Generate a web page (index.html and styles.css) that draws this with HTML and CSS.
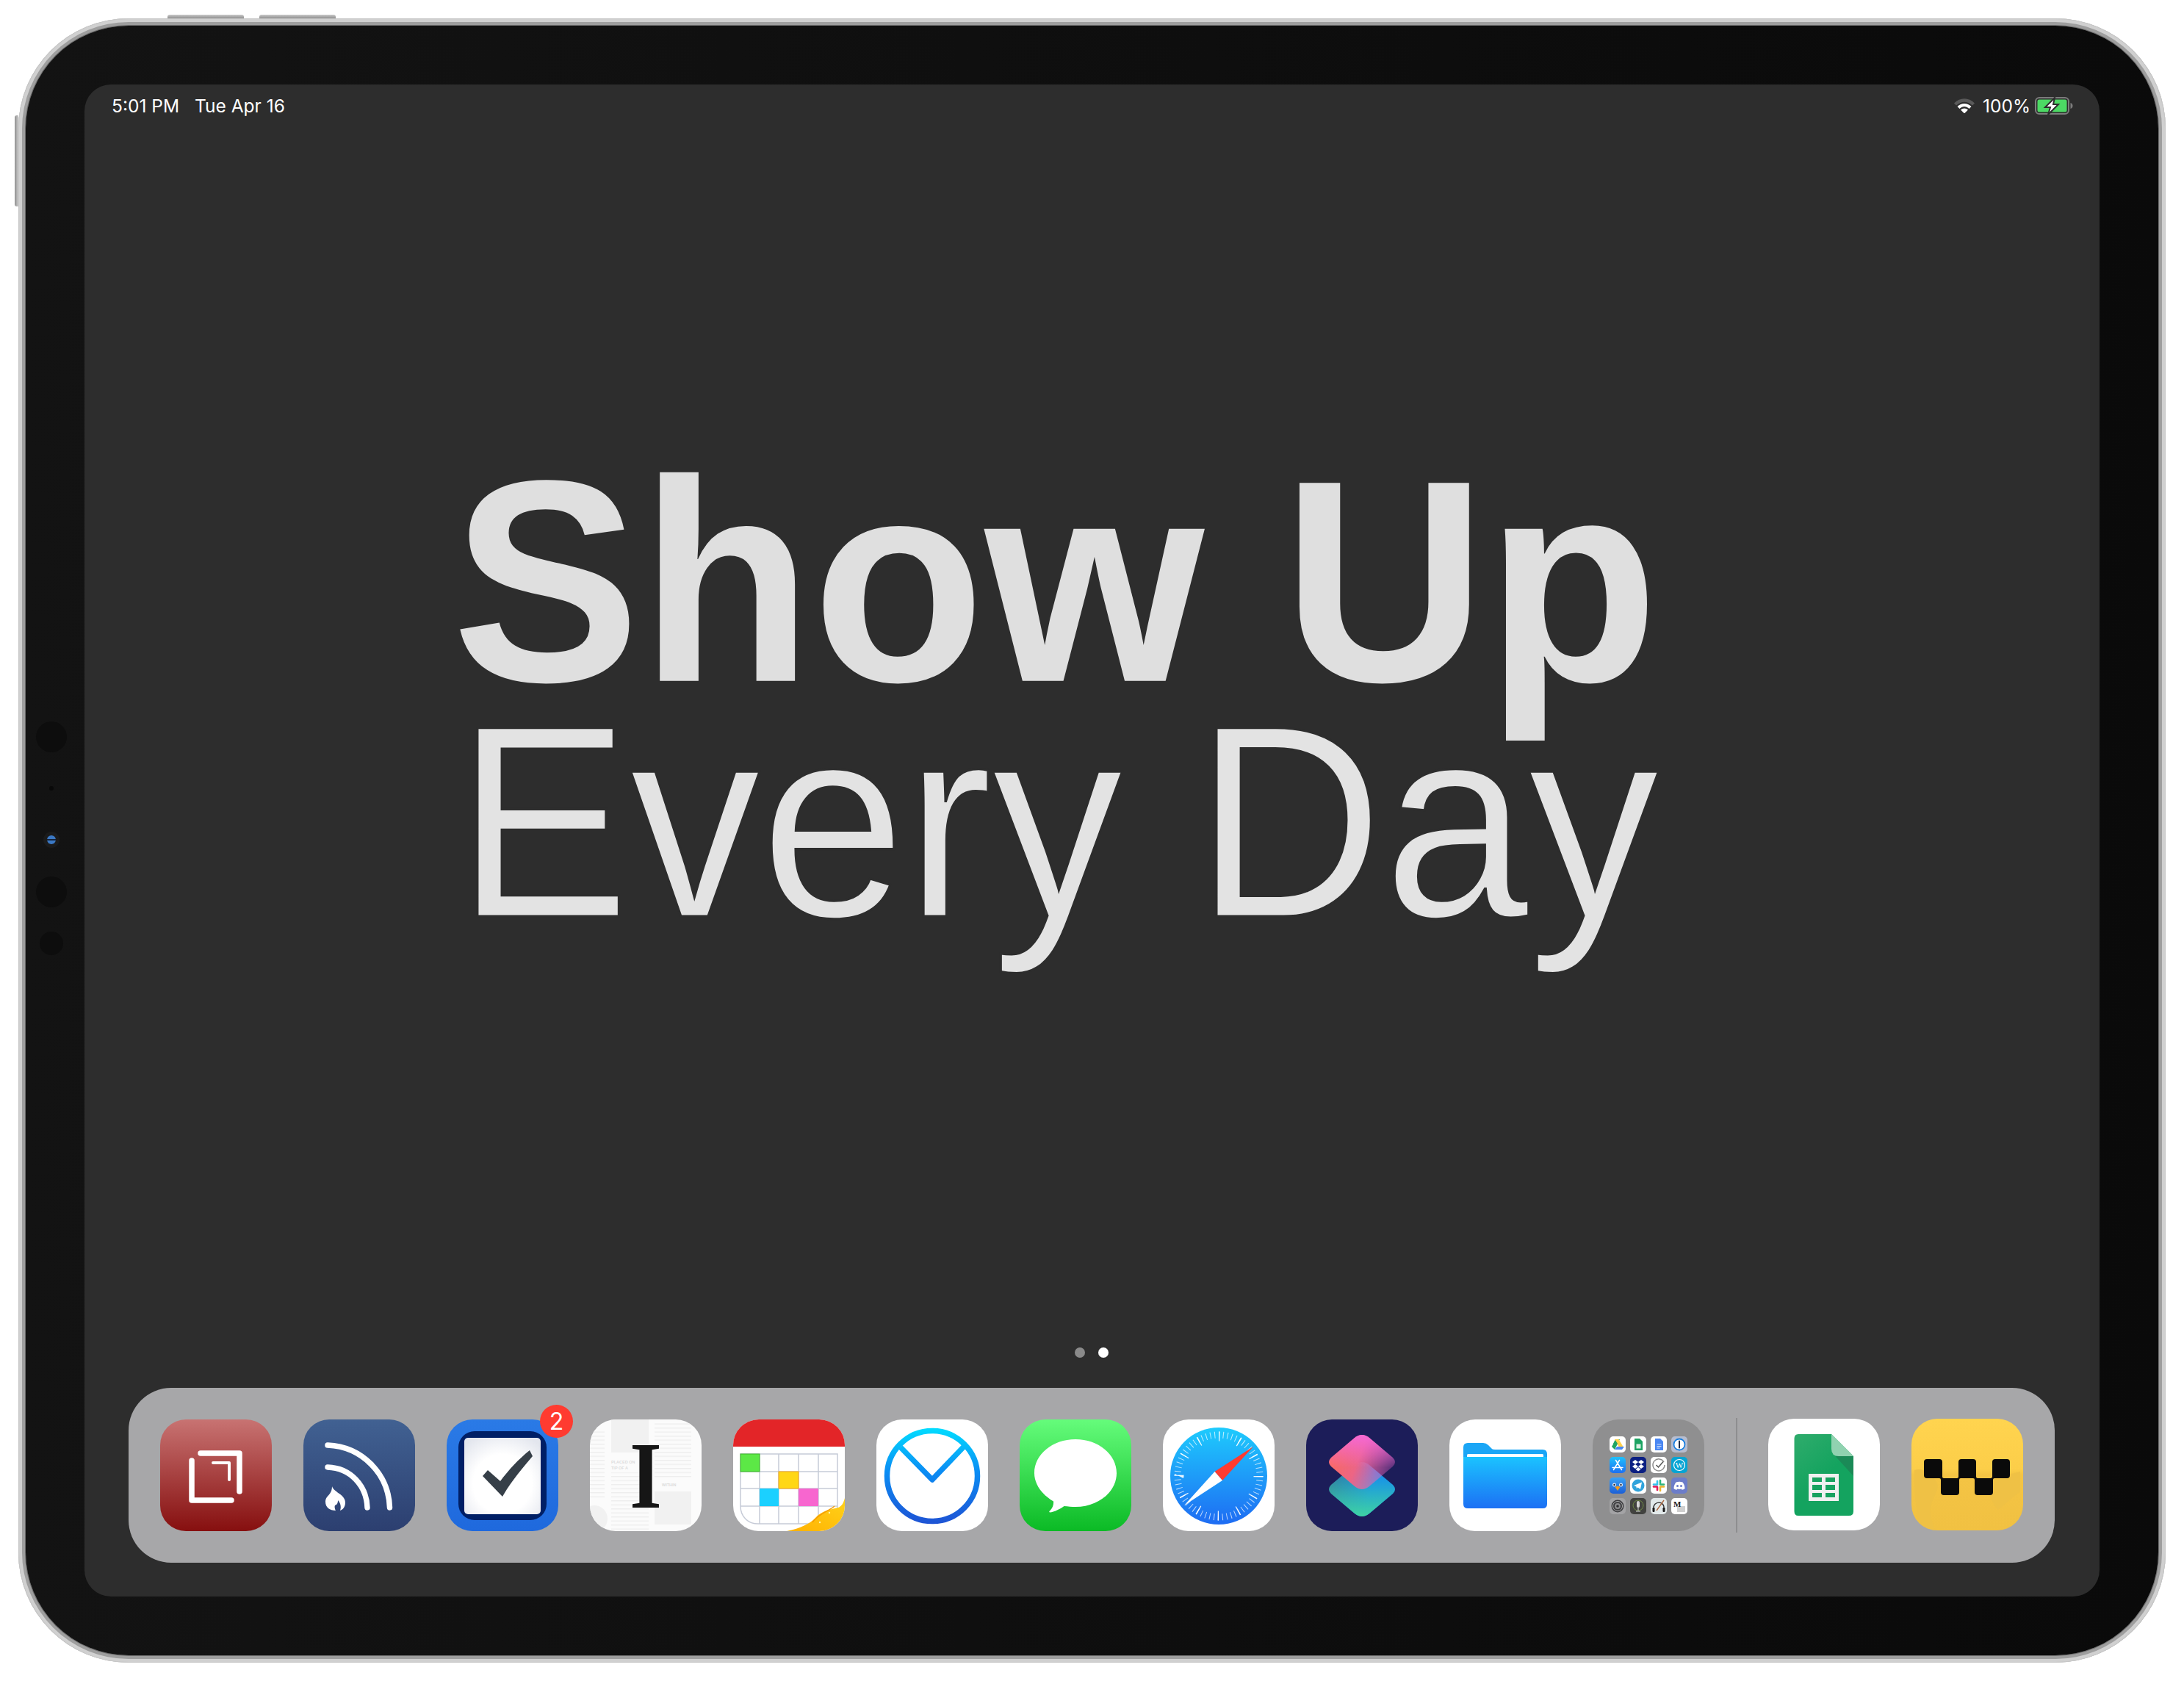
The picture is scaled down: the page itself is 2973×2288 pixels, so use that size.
FILE: index.html
```html
<!DOCTYPE html>
<html>
    <head>
        <title>Show Up Every Day</title>
        <link rel="stylesheet" href="styles.css">
    </head>
    <body>
        <div class="device">
            <div class="hw-btn hw-top hw-top-a"></div>
            <div class="hw-btn hw-top hw-top-b"></div>
            <div class="hw-btn hw-side"></div>
            <div class="bezel">
                <div class="lens lens-a"></div>
                <div class="mic"></div>
                <div class="led"></div>
                <div class="lens lens-b"></div>
                <div class="lens lens-c"></div>

                <div class="screen">
                    <div class="status">
                        <div class="status-left"><span>5:01 PM</span><span>Tue Apr 16</span></div>
                        <div class="status-right">
                            <svg class="wifi" viewBox="0 0 28 20">
                                <path d="M0 6.5C8-2 20-2 28 6.5L25 9.5C18 3 10 3 3 9.500Z" fill="#5a5a5a"/>
                                <path d="M4.500 11C10 5.500 18 5.500 23.500 11L20.500 14C16.500 10 11.500 10 7.500 14Z" fill="#fff"/>
                                <path d="M9 15.500C12 12.800 16 12.800 19 15.500L14 20.500Z" fill="#fff"/>
                            </svg>
                            <span class="pct">100%</span>
                            <svg class="battery" viewBox="0 0 52 24">
                                <rect x="1" y="1" width="45" height="22" rx="5" fill="none" stroke="#7c7c7c" stroke-width="2"/>
                                <rect x="3.500" y="3.500" width="40" height="17" rx="2.500" fill="#4cd964"/>
                                <path d="M48.500 8C51 9 51.500 10.500 51.500 12S51 15 48.500 16Z" fill="#7c7c7c"/>
                                <path d="M27 1L14 14H21L18 24L32 10H25Z" fill="#fff" stroke="#2d2d2d" stroke-width="2"/>
                            </svg>
                        </div>
                    </div>

                    <div class="main">
                        <h1 class="title">
                            <span class="title-bold">Show Up</span>
                            <span class="title-light">Every Day</span>
                        </h1>
                    </div>

                    <div class="dots"><i class="dot"></i><i class="dot dot-on"></i></div>

                    <div class="dock">
                        <!-- red app -->
                        <svg class="icon" viewBox="0 0 152 152">
                            <defs><linearGradient id="g1" x1="0" y1="0" x2="0" y2="1"><stop offset="0" stop-color="#c87372"/><stop offset="1" stop-color="#860f0f"/></linearGradient></defs>
                            <rect width="152" height="152" fill="url(#g1)"/>
                            <g fill="none" stroke="#fff" stroke-linecap="round" stroke-linejoin="round">
                                <path d="M55 46H108V98" stroke-width="7.500"/>
                                <path d="M43 56V110H97" stroke-width="7.500"/>
                                <path d="M72 59H94V82" stroke-width="4"/>
                            </g>
                        </svg>
                        <!-- feed reader -->
                        <svg class="icon" viewBox="0 0 152 152">
                            <defs><linearGradient id="g2" x1="0" y1="0" x2="0" y2="1"><stop offset="0" stop-color="#416192"/><stop offset="1" stop-color="#2c3f70"/></linearGradient></defs>
                            <rect width="152" height="152" fill="url(#g2)"/>
                            <g fill="none" stroke="#fff" stroke-width="7.500" stroke-linecap="round">
                                <path d="M33 35C80 37 116 74 117.500 120"/>
                                <path d="M33 65C64 66 86 90 87 120"/>
                            </g>
                            <path d="M39 91C41 99 57 102 57 113C57 120 53 123 50 124C52 118 50 113 47 110C47 115 45 116 43 117C42 119 43 122 44 124C36 124 30 120 30 112C30 106 34 104 36 101C38 98 39 95 39 91Z" fill="#fff"/>
                        </svg>
                        <!-- task list, has a badge -->
                        <div class="icon-wrap">
                            <svg class="icon" viewBox="0 0 152 152">
                                <defs>
                                    <linearGradient id="g3" x1="0" y1="0" x2="0" y2="1"><stop offset="0" stop-color="#2a7ae6"/><stop offset="1" stop-color="#1f69dd"/></linearGradient>
                                    <radialGradient id="g3b" cx=".5" cy=".6" r=".7"><stop offset=".55" stop-color="#fff"/><stop offset="1" stop-color="#e3e6ee"/></radialGradient>
                                </defs>
                                <rect width="152" height="152" fill="url(#g3)"/>
                                <rect x="16" y="16" width="120" height="121" rx="22" fill="#001f66"/>
                                <rect x="24" y="25" width="104" height="104" rx="5" fill="url(#g3b)"/>
                                <path d="M49 77L56 69L73 84C85 68 98 54 113 42L117 50C102 68 88 84 76 105Z" fill="#363f48"/>
                            </svg>
                            <span class="badge">2</span>
                        </div>
                        <!-- newspaper app -->
                        <svg class="icon" viewBox="0 0 152 152">
                            <defs><pattern id="news" width="10" height="5.500" patternUnits="userSpaceOnUse"><rect width="10" height="1.400" fill="#eeeeee"/></pattern></defs>
                            <rect width="152" height="152" fill="#fbfbfb"/>
                            <rect x="0" y="14" width="20" height="95" fill="url(#news)"/>
                            <rect x="29" y="0" width="51" height="45" fill="#f1f1f1"/>
                            <rect x="29" y="72" width="51" height="80" fill="url(#news)"/>
                            <rect x="88" y="4" width="50" height="76" fill="url(#news)"/>
                            <rect x="88" y="98" width="50" height="45" fill="#f1f1f1"/>
                            <circle cx="6" cy="135" r="18" fill="#f1f1f1"/>
                            <g class="news-head"><text x="29" y="60">PLACED ON</text><text x="29" y="68">TIP OF A</text><text x="98" y="91">WITHIN</text></g>
                            <text class="insta" transform="translate(76 120) scale(.86 1)" text-anchor="middle">I</text>
                        </svg>
                        <!-- calendar -->
                        <svg class="icon" viewBox="0 0 152 152">
                            <defs><linearGradient id="g5" x1="0" y1="1" x2="1" y2="0"><stop offset="0" stop-color="#ffb000"/><stop offset="1" stop-color="#ffd21a"/></linearGradient></defs>
                            <rect width="152" height="152" fill="#fff"/>
                            <rect width="152" height="37" fill="#e32528"/>
                            <path d="M10 118V47H142V125M10 118C10 132 20 142 34 142H116M36 47V142M62 47V142M89 47V142M116 47V142M10 71H142M10 94H142M10 118H142" fill="none" stroke="#c6cbd7" stroke-width="1.500"/>
                            <rect x="10" y="47" width="26" height="24" fill="#5ce846" stroke="#3eb42c"/>
                            <rect x="62" y="71" width="27" height="23" fill="#ffd716" stroke="#f3a51a"/>
                            <rect x="36" y="94" width="26" height="24" fill="#1bd0ff"/>
                            <rect x="89" y="94" width="27" height="24" fill="#f766cf"/>
                            <path d="M73 152C92 148 104 142 112 134C120 124 134 122 143 120C148 118 150 114 152 107V152Z" fill="url(#g5)"/>
                            <path d="M108 140C116 128 130 125 138 118" fill="none" stroke="#f59a00" stroke-width="1.500"/>
                            <circle cx="131" cy="127" r="1.200" fill="#fff5a8"/><circle cx="118" cy="140" r="1.200" fill="#fff5a8"/>
                        </svg>
                        <!-- mail -->
                        <svg class="icon" viewBox="0 0 152 152">
                            <defs><linearGradient id="g6" gradientUnits="userSpaceOnUse" x1="0" y1="12" x2="0" y2="142"><stop offset="0" stop-color="#02dcff"/><stop offset=".45" stop-color="#0a8df4"/><stop offset="1" stop-color="#1e53d4"/></linearGradient></defs>
                            <rect width="152" height="152" fill="#fff"/>
                            <circle cx="76" cy="77" r="61.500" fill="none" stroke="url(#g6)" stroke-width="7.500"/>
                            <path d="M33 38L76 82L119 37" fill="none" stroke="url(#g6)" stroke-width="7.500" stroke-linejoin="round"/>
                        </svg>
                        <!-- messages -->
                        <svg class="icon" viewBox="0 0 152 152">
                            <defs><linearGradient id="g7" x1="0" y1="0" x2="0" y2="1"><stop offset="0" stop-color="#65fc7b"/><stop offset="1" stop-color="#0bba25"/></linearGradient></defs>
                            <rect width="152" height="152" fill="url(#g7)"/>
                            <path d="M76 27C107 27 132 47.500 132 73C132 98.500 107 119 76 119C71 119 66 118.500 60.500 118C55 122 47 126 41 126.500C40 126 40 125 41 124.500C45 120 46.500 116 46 111.500C30 102 20 88 20 73C20 47.500 45 27 76 27Z" fill="#fff"/>
                        </svg>
                        <!-- browser -->
                        <svg class="icon" viewBox="0 0 152 152">
                            <defs><linearGradient id="g8" x1="0" y1="0" x2="0" y2="1"><stop offset="0" stop-color="#1ecbfd"/><stop offset="1" stop-color="#1e6cf3"/></linearGradient></defs>
                            <rect width="152" height="152" fill="#fff"/>
                            <circle cx="76" cy="77" r="66" fill="url(#g8)"/>
                            <circle cx="76" cy="77" r="56" fill="none" stroke="#fff" stroke-opacity=".7" stroke-width="9" pathLength="120" stroke-dasharray=".35 1.650"/>
                            <circle cx="76" cy="77" r="54" fill="none" stroke="#fff" stroke-opacity=".9" stroke-width="13" pathLength="120" stroke-dasharray=".5 9.500"/>
                            <path d="M70.500 71L123 37L81 83Z" fill="#ff3b30"/>
                            <path d="M70.500 71L29 117L81 83Z" fill="#fff"/>
                        </svg>
                        <!-- shortcuts -->
                        <svg class="icon" viewBox="0 0 152 152">
                            <defs>
                                <linearGradient id="g9a" x1="0" y1="0" x2="1" y2=".2"><stop offset="0" stop-color="#34708f"/><stop offset=".7" stop-color="#0f85f7"/></linearGradient>
                                <linearGradient id="g9c" x1="0" y1="0" x2="0" y2="1"><stop offset=".1" stop-color="#3cd0a5" stop-opacity="0"/><stop offset="1" stop-color="#3fd3a2"/></linearGradient>
                                <linearGradient id="g9b" x1="0" y1=".3" x2="1" y2=".6"><stop offset="0" stop-color="#fb6b5c"/><stop offset=".45" stop-color="#ec6585"/><stop offset="1" stop-color="#f564cf" stop-opacity=".25"/></linearGradient>
                                <linearGradient id="g9d" x1="0" y1="0" x2="0" y2="1"><stop offset="0" stop-color="#f568d6"/><stop offset=".6" stop-color="#f568d6" stop-opacity="0"/></linearGradient>
                            </defs>
                            <rect width="152" height="152" fill="#1c1d59"/>
                            <path d="M66 62Q76 54 86 62L118 89Q124 95 118 101L86 128Q76 136 66 128L34 101Q28 95 34 89Z" fill="url(#g9a)"/>
                            <path d="M66 62Q76 54 86 62L118 89Q124 95 118 101L86 128Q76 136 66 128L34 101Q28 95 34 89Z" fill="url(#g9c)"/>
                            <path d="M66 25Q76 17 86 25L118 52Q124 58 118 64L86 91Q76 99 66 91L34 64Q28 58 34 52Z" fill="url(#g9b)"/>
                            <path d="M66 25Q76 17 86 25L118 52Q124 58 118 64L86 91Q76 99 66 91L34 64Q28 58 34 52Z" fill="url(#g9d)"/>
                        </svg>
                        <!-- files -->
                        <svg class="icon" viewBox="0 0 152 152">
                            <defs><linearGradient id="g10" x1="0" y1="0" x2="0" y2="1"><stop offset="0" stop-color="#1bc3ff"/><stop offset="1" stop-color="#1c70f4"/></linearGradient></defs>
                            <rect width="152" height="152" fill="#fff"/>
                            <path d="M19 38Q19 32 25 32H46Q50 32 53 35L58 40Q59 41 62 41H127Q133 41 133 47V60H19Z" fill="#1ba6f6"/>
                            <rect x="24" y="47" width="104" height="5" rx="1.500" fill="#fff"/>
                            <path d="M19 51H133V115Q133 121 127 121H25Q19 121 19 115Z" fill="url(#g10)"/>
                        </svg>
                        <!-- folder -->
                        <div class="folder">
                            <svg class="mini" viewBox="0 0 22 22"><rect width="22" height="22" fill="#fff"/><path d="M8 4H14L8 15L5 10Z" fill="#1fa463"/><path d="M14 4L20 14H14L8.500 4Z" fill="#ffd04b" transform="translate(-1.500 0)"/><path d="M7 18L10 14H20L17 18Z" fill="#4687f4"/><path d="M3 14L8 5.500L11 10L7 18Z" fill="#1fa463"/></svg>
                            <svg class="mini" viewBox="0 0 22 22"><rect width="22" height="22" fill="#fff"/><path d="M6 3H13L17 7V19H6Z" fill="#1da362"/><rect x="8.500" y="10.500" width="6" height="6" fill="#d8eee2"/></svg>
                            <svg class="mini" viewBox="0 0 22 22"><rect width="22" height="22" fill="#fff"/><path d="M6 3H13L17 7V19H6Z" fill="#4a87f3"/><path d="M8.500 11H14.500M8.500 13.500H14.500M8.500 16H12.500" stroke="#cfe0fb" stroke-width="1"/></svg>
                            <svg class="mini" viewBox="0 0 22 22"><rect width="22" height="22" fill="#b6bdd0"/><circle cx="11" cy="11" r="7.500" fill="#fff" stroke="#1a7fe0" stroke-width="1.800"/><rect x="10" y="5.500" width="2" height="11" rx="1" fill="#20304a"/></svg>

                            <svg class="mini" viewBox="0 0 22 22"><defs><linearGradient id="m5" x1="0" y1="0" x2="0" y2="1"><stop offset="0" stop-color="#1fc1fb"/><stop offset="1" stop-color="#1c6ff2"/></linearGradient></defs><rect width="22" height="22" fill="url(#m5)"/><path d="M8.500 4.500L16.500 17.500M13.500 4.500L5.500 17.500M4 14.500H18" stroke="#fff" stroke-width="1.500" stroke-linecap="round"/></svg>
                            <svg class="mini" viewBox="0 0 22 22"><rect width="22" height="22" fill="#0b1f82"/><path d="M7 4L11 7L7 10L3 7ZM15 4L19 7L15 10L11 7ZM7 10L11 13L7 16L3 13ZM15 10L19 13L15 16L11 13ZM11 14L14.500 17L11 19.500L7.500 17Z" fill="#fff"/></svg>
                            <svg class="mini" viewBox="0 0 22 22"><rect width="22" height="22" fill="#fff"/><path d="M18 7A8 8 0 1 0 19 11" fill="none" stroke="#8b8b8b" stroke-width="1.500"/><path d="M7.500 11L10.500 14L17 6.500" fill="none" stroke="#555" stroke-width="1.500"/></svg>
                            <svg class="mini" viewBox="0 0 22 22"><rect width="22" height="22" fill="#06a4d3"/><circle cx="11" cy="11" r="7.500" fill="none" stroke="#fff" stroke-width="1.200"/><text class="mini-w" x="11" y="14.500" text-anchor="middle">W</text></svg>

                            <svg class="mini" viewBox="0 0 22 22"><defs><linearGradient id="m9" x1="0" y1="0" x2="0" y2="1"><stop offset="0" stop-color="#3aa2f5"/><stop offset="1" stop-color="#1c5fd6"/></linearGradient></defs><rect width="22" height="22" fill="url(#m9)"/><circle cx="6.500" cy="10" r="2.500" fill="#dfe9f5"/><circle cx="15.500" cy="10" r="2.500" fill="#dfe9f5"/><circle cx="6.500" cy="10" r="1.200" fill="#223"/><circle cx="15.500" cy="10" r="1.200" fill="#223"/><path d="M7.500 13L11 11.500L14.500 13L11 18Z" fill="#f39a1c"/></svg>
                            <svg class="mini" viewBox="0 0 22 22"><rect width="22" height="22" fill="#fff"/><circle cx="11" cy="11" r="8.500" fill="#2fa3dc"/><path d="M5 11L16 6.500L14 16L10.500 13.500L8.800 15L8.500 12.500Z" fill="#fff"/></svg>
                            <svg class="mini" viewBox="0 0 22 22"><rect width="22" height="22" fill="#fff"/><g stroke-width="2.600" stroke-linecap="round"><path d="M9 5V9.500" stroke="#36c5f0"/><path d="M4 9.500H8" stroke="#36c5f0"/><path d="M13 4V8" stroke="#2eb67d"/><path d="M13 9.500H18" stroke="#2eb67d"/><path d="M13 13V18" stroke="#ecb22e"/><path d="M14 12.500H18" stroke="#ecb22e"/><path d="M9 13V17" stroke="#e01e5a"/><path d="M4 12.500H8.500" stroke="#e01e5a"/></g></svg>
                            <svg class="mini" viewBox="0 0 22 22"><rect width="22" height="22" fill="#6c7dc9"/><path d="M6.500 6.500C9.500 5.500 12.500 5.500 15.500 6.500C17.500 9 18.500 12 18.500 15C17.500 16 16 16.500 14.500 16.800L13.800 15.500C12 16 10 16 8.200 15.500L7.500 16.800C6 16.500 4.500 16 3.500 15C3.500 12 4.500 9 6.500 6.500Z" fill="#fff"/><circle cx="8.500" cy="11.500" r="1.500" fill="#6c7dc9"/><circle cx="13.500" cy="11.500" r="1.500" fill="#6c7dc9"/></svg>

                            <svg class="mini" viewBox="0 0 22 22"><rect width="22" height="22" fill="#a3a3a5"/><circle cx="11" cy="11" r="8.500" fill="#3e3e40"/><circle cx="11" cy="11" r="6.500" fill="none" stroke="#a9a9ab" stroke-width="1"/><circle cx="11" cy="11" r="4" fill="#8a8a8c"/><circle cx="11" cy="11" r="1.800" fill="#2f2f31"/></svg>
                            <svg class="mini" viewBox="0 0 22 22"><rect width="22" height="22" fill="#41423f"/><circle cx="11" cy="10" r="7" fill="none" stroke="#6f8a45" stroke-width="1"/><rect x="9" y="4" width="4" height="9" rx="2" fill="#d5d5d5"/><path d="M11 13V17M8 18H14" stroke="#d5d5d5" stroke-width="1"/></svg>
                            <svg class="mini" viewBox="0 0 22 22"><rect width="22" height="22" fill="#e2e9ea"/><path d="M4 14C3 4 19 3 18 14" fill="none" stroke="#2a2a2a" stroke-width="1.300"/><rect x="2.500" y="13" width="3" height="6" rx="1.200" fill="#1a1a1a"/><rect x="16.500" y="13" width="3" height="6" rx="1.200" fill="#1a1a1a"/><path d="M8 17L18 3" stroke="#a8623a" stroke-width="1.300"/></svg>
                            <svg class="mini" viewBox="0 0 22 22"><rect width="22" height="22" fill="#fff"/><rect x="8" y="11" width="11" height="8" fill="#cfcfcf"/><text class="mini-m" x="3" y="12">M</text></svg>
                        </div>

                        <div class="dock-sep"></div>

                        <!-- sheets -->
                        <svg class="icon icon-up" viewBox="0 0 152 152">
                            <defs><linearGradient id="g12" x1="0" y1="0" x2=".6" y2="1"><stop offset="0" stop-color="#2fac6c"/><stop offset=".6" stop-color="#14a35f"/></linearGradient></defs>
                            <rect width="152" height="152" fill="#fff"/>
                            <path d="M41 21H86L116 51V126Q116 132 110 132H41Q35.500 132 35.500 126V27Q35.500 21 41 21Z" fill="url(#g12)"/>
                            <path d="M86 45L116 78V51H92Z" fill="#1b8a57"/>
                            <path d="M86 21L116 51H96Q86 51 86 41Z" fill="#90d2b0"/>
                            <rect x="55" y="75" width="41" height="37" fill="#f0f0f0"/>
                            <path d="M60 80H73V86H60ZM78 80H91V86H78ZM60 90H73V97H60ZM78 90H91V97H78ZM60 101H73V107H60ZM78 101H91V107H78Z" fill="#17a25f"/>
                        </svg>
                        <!-- taxi -->
                        <svg class="icon icon-up" viewBox="0 0 152 152">
                            <defs><linearGradient id="g13" x1="0" y1="0" x2="0" y2="1"><stop offset="0" stop-color="#ffd44f"/><stop offset=".45" stop-color="#fcce49"/><stop offset=".5" stop-color="#f4c444"/><stop offset="1" stop-color="#f1c142"/></linearGradient></defs>
                            <rect width="152" height="152" fill="url(#g13)"/>
                            <path d="M4 70C14 66 28 74 34 86C40 94 30 104 26 120C24 130 30 144 32 152H12C8 130 2 100 4 70ZM100 84C112 82 132 76 148 72V100C138 106 126 118 118 124C110 116 104 100 100 84Z" fill="#efc145"/>
                            <path d="M17 59Q17 55 21 55H38Q42 55 42 59V79Q42 81 44 81H62Q64 81 64 79V59Q64 55 68 55H84Q88 55 88 59V79Q88 81 90 81H108Q110 81 110 79V59Q110 55 114 55H130Q134 55 134 59V77Q134 81 130 81H113Q111 81 111 83V100Q111 104 107 104H90Q86 104 86 100V83Q86 81 84 81H67Q65 81 65 83V100Q65 104 61 104H44Q40 104 40 100V83Q40 81 38 81H21Q17 81 17 77Z" fill="#0a0a0a"/>
                        </svg>
                    </div>
                </div>
            </div>
        </div>
    </body>
</html>
```

FILE: styles.css
```css
html, body {
    margin: 0;
    padding: 0;
    background: #fff;
}
body {
    font-family: "Inter", "Liberation Sans", sans-serif;
    width: 2973px;
    height: 2288px;
    overflow: hidden;
}

/* hardware */
.device {
    position: relative;
    box-sizing: border-box;
    width: 2923px;
    height: 2238px;
    margin: 25px;
    padding: 10px;
    border-radius: 150px;
    background: #9e9e9e;
    box-shadow: inset 0 0 0 1px #c6c6c6, inset 0 0 0 5px #d0d0d0;
}
.hw-btn {
    position: absolute;
    background: linear-gradient(#c9c9c9, #8f8f8f);
}
.hw-top {
    top: -5px;
    width: 104px;
    height: 5px;
    border-radius: 3px 3px 0 0;
}
.hw-top-a { left: 203px; }
.hw-top-b { left: 328px; }
.hw-side {
    left: -5px;
    top: 132px;
    width: 5px;
    height: 124px;
    border-radius: 3px 0 0 3px;
    background: linear-gradient(90deg, #8f8f8f, #c9c9c9);
}
.bezel {
    position: relative;
    box-sizing: border-box;
    width: 100%;
    height: 100%;
    padding: 80px;
    border-radius: 140px;
    background: linear-gradient(90deg, #131313, #0a0a0a);
    box-shadow: 0 0 0 1px #6e6e6e;
}
.lens, .mic, .led {
    position: absolute;
    border-radius: 50%;
    background: #0d0d0d;
}
.lens-a { left: 14px; top: 947px; width: 42px; height: 42px; }
.lens-b { left: 14px; top: 1158px; width: 42px; height: 42px; }
.lens-c { left: 19px; top: 1233px; width: 32px; height: 32px; }
.mic { left: 32px; top: 1035px; width: 6px; height: 6px; background: #090909; }
.led {
    left: 29px;
    top: 1102px;
    width: 12px;
    height: 12px;
    background: linear-gradient(#3b78c4 40%, #12233d 45%, #12233d 58%, #3b78c4 62%);
    box-shadow: 0 0 0 5px #1b1b1b;
}

/* screen */
.screen {
    display: flex;
    flex-direction: column;
    height: 100%;
    border-radius: 36px;
    background: #2d2d2d;
    color: #fff;
}
.status {
    display: flex;
    justify-content: space-between;
    align-items: center;
    height: 58px;
    padding: 0 36px 0 37px;
    font-size: 24.500px;
}
.status-left {
    display: flex;
    gap: 21px;
}
.status-right {
    display: flex;
    align-items: center;
}
.wifi {
    width: 28px;
    height: 20px;
    margin-right: 11px;
}
.pct {
    margin-right: 6px;
}
.battery {
    width: 52px;
    height: 24px;
}

.main {
    flex: 1;
    display: flex;
    align-items: center;
    justify-content: center;
}
.title {
    width: 2400px;
    margin: 0;
    padding-bottom: 112px;
    font-weight: 400;
    text-align: center;
    font-family: "Liberation Sans", Arial, sans-serif;
}
.title-bold, .title-light {
    display: block;
    white-space: nowrap;
}
.title-bold {
    padding-right: 100px;
    font-size: 384px;
    line-height: 340px;
    font-weight: 700;
    color: #dfdfdf;
    transform: scaleY(1.02);
}
.title-light {
    padding-right: 94px;
    font-size: 355px;
    line-height: 314px;
    color: #e3e3e3;
    -webkit-text-stroke: 3px #2d2d2d;
    transform: scaleY(1.05);
}

.dots {
    display: flex;
    justify-content: center;
    gap: 18px;
    margin-bottom: 41px;
    padding-right: 1px;
}
.dot {
    width: 14px;
    height: 14px;
    border-radius: 50%;
    background: #8a8a8a;
}
.dot-on {
    background: #fff;
}

/* dock */
.dock {
    display: flex;
    align-items: center;
    gap: 43px;
    height: 238px;
    box-sizing: border-box;
    margin: 0 61px 46px 60px;
    padding: 0 43px;
    border-radius: 58px;
    background: #a7a7a9;
}
.icon {
    display: block;
    flex: none;
    width: 152px;
    height: 152px;
    border-radius: 35px;
}
.icon-up {
    margin-bottom: 2px;
}
.icon-wrap {
    position: relative;
    flex: none;
}
.badge {
    position: absolute;
    top: -20px;
    right: -20px;
    width: 45px;
    height: 45px;
    border-radius: 50%;
    background: #ff3b30;
    color: #fff;
    font-size: 32px;
    line-height: 45px;
    text-align: center;
}
.dock-sep {
    flex: none;
    width: 2px;
    height: 156px;
    margin-right: -1px;
    background: #8e8e90;
}
.folder {
    flex: none;
    box-sizing: border-box;
    display: grid;
    grid-template-columns: repeat(4, 22px);
    grid-auto-rows: 22px;
    gap: 6px;
    align-content: center;
    justify-content: center;
    width: 152px;
    height: 152px;
    border-radius: 35px;
    background: #8f8f90;
}
.mini {
    display: block;
    width: 22px;
    height: 22px;
    border-radius: 5px;
}
.insta {
    font-family: "Liberation Serif", serif;
    font-weight: 700;
    font-size: 130px;
    fill: #161616;
}
.news-head {
    font-family: "Liberation Sans", sans-serif;
    font-size: 5.500px;
    font-weight: 700;
    fill: #dcdcdc;
}
.mini-w {
    font-family: "Liberation Serif", serif;
    font-size: 11px;
    fill: #fff;
}
.mini-m {
    font-family: "Liberation Serif", serif;
    font-weight: 700;
    font-size: 11px;
    fill: #111;
}
```
